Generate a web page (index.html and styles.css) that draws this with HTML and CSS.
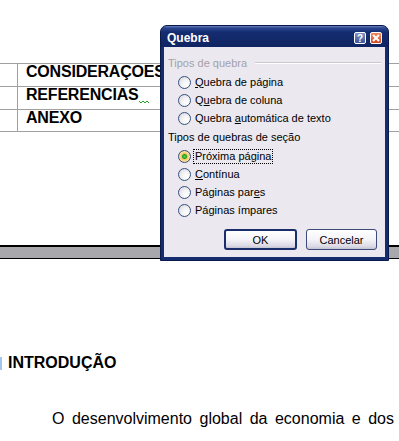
FILE: index.html
```html
<!DOCTYPE html>
<html lang="pt">
<head>
<meta charset="UTF-8" />
<title>Quebra</title>
<link rel="stylesheet" href="styles.css">
</head>
<body>

<!-- documento -->
<div class="doc">
  <div class="toc">
    <div class="toc-row"><span class="toc-num"></span><span class="toc-title">CONSIDERAÇOES FINAIS</span></div>
    <div class="toc-row"><span class="toc-num"></span><span class="toc-title">REFERENCIAS<svg class="squiggle" width="11" height="4" viewBox="0 0 11 4"><polyline points="0,1 2,3 4,1 6,3 8,1 10,3" fill="none" stroke="#2aa02a" stroke-width="1"/></svg></span></div>
    <div class="toc-row"><span class="toc-num"></span><span class="toc-title">ANEXO</span></div>
  </div>

  <div class="band"></div>

  <h2 class="heading"><span class="mark"></span>INTRODUÇÃO</h2>
  <p class="para">O desenvolvimento global da economia e dos</p>
</div>

<!-- janela Quebra -->
<div class="dialog">
  <div class="titlebar">
    <span class="title">Quebra</span>
    <span class="tb-btn help">?</span>
    <span class="tb-btn close">
      <svg width="8" height="8" viewBox="0 0 8 8"><path d="M1 1 L7 7 M7 1 L1 7" stroke="#fff" stroke-width="2"/></svg>
    </span>
  </div>
  <div class="panel">
    <div class="group-title disabled">Tipos de quebra</div>
    <div class="opt"><span class="radio"></span><span class="label"><u>Q</u>uebra de página</span></div>
    <div class="opt"><span class="radio"></span><span class="label">Q<u>u</u>ebra de coluna</span></div>
    <div class="opt"><span class="radio"></span><span class="label">Quebra <u>a</u>utomática de texto</span></div>

    <div class="group-title plain">Tipos de quebras de seção</div>
    <div class="opt"><span class="radio on"></span><span class="label focus">Próxima página</span></div>
    <div class="opt"><span class="radio"></span><span class="label"><u>C</u>ontínua</span></div>
    <div class="opt"><span class="radio"></span><span class="label">Páginas par<u>e</u>s</span></div>
    <div class="opt"><span class="radio"></span><span class="label">Pá<u>g</u>inas ímpares</span></div>

    <div class="buttons">
      <button class="btn default">OK</button>
      <button class="btn">Cancelar</button>
    </div>
  </div>
</div>

</body>
</html>
```

FILE: styles.css
```css
* { box-sizing: border-box; }

body {
  margin: 0;
  width: 399px;
  height: 441px;
  overflow: hidden;
  position: relative;
  background: #fff;
  font-family: "Liberation Sans", Arial, sans-serif;
  color: #000;
}

/* documento do Word */
.doc { padding-top: 63px; }

.toc { border-top: 1px solid #a0a0a0; }
.toc-row {
  display: flex;
  height: 23px;
  border-bottom: 1px solid #a0a0a0;
  white-space: nowrap;
}
.toc-row:last-child { height: 22px; }
.toc-num { width: 18px; flex: none; border-right: 1px solid #a0a0a0; }
.toc-title {
  padding-left: 8px;
  font-weight: bold;
  font-size: 16px;
  line-height: 16px;
  letter-spacing: -0.2px;
}
.squiggle { vertical-align: -4px; margin-left: 1px; }

.band {
  margin-top: 113px;
  height: 14px;
  border-top: 2px solid #000;
  border-bottom: 1px solid #000;
  background: #a8a7ac;
}

.heading {
  margin: 95px 0 0;
  font-size: 16px;
  line-height: 18px;
  font-weight: bold;
}
.mark {
  display: inline-block;
  width: 2px;
  height: 13px;
  margin-right: 6px;
  background: #9fc6ec;
  vertical-align: -2px;
}

.para {
  margin: 38px 0 0 8px;
  width: 386px;
  font-size: 16px;
  line-height: 18px;
  text-indent: 44px;
  text-align: justify;
  text-align-last: justify;
}

/* janela de dialogo estilo XP */
.dialog {
  position: absolute;
  left: 160px;
  top: 25px;
  width: 229px;
  height: 236px;
  border: 1px solid #0a1a4c;
  border-radius: 7px 7px 0 0;
  background: #152c6e;
  padding: 0 3px 3px;
  display: flex;
  flex-direction: column;
  font-size: 11px;
}

.titlebar {
  height: 21px;
  margin: 0 -3px;
  padding: 3px 6px 0 6px;
  display: flex;
  align-items: center;
  gap: 4px;
  border-radius: 6px 6px 0 0;
  background: linear-gradient(#6a80bc 0, #2c4690 2px, #142c70 6px, #0f2462 100%);
}
.title {
  flex: 1;
  color: #fff;
  font-weight: bold;
  font-size: 12px;
}
.tb-btn {
  width: 12px;
  height: 12px;
  border: 1px solid #fff;
  border-radius: 2px;
  display: flex;
  align-items: center;
  justify-content: center;
  color: #fff;
  font-weight: bold;
  font-size: 10px;
}
.help { background: linear-gradient(#7f93c6, #3d5599); }
.close { background: linear-gradient(#f08a5c, #d4471f); }

.panel {
  flex: 1;
  background: #ebe9ef;
  padding: 9px 4px 0 4px;
}

.group-title {
  height: 14px;
  line-height: 14px;
  display: flex;
  align-items: center;
}
.group-title.disabled { color: #a3a1aa; margin-bottom: 3px; }
.group-title.disabled::after {
  content: "";
  flex: 1;
  margin-left: 8px;
  border-top: 1px solid #c9c7d0;
  border-bottom: 1px solid #fff;
}
.group-title.plain { margin: 3px 0 3px; }

.opt {
  height: 18px;
  padding-left: 10px;
  display: flex;
  align-items: center;
}
.label { margin-left: 3px; padding: 0 1px; line-height: 13px; }
.label.focus { outline: 1px dotted #000; }

.radio {
  width: 13px;
  height: 13px;
  border-radius: 50%;
  border: 1px solid #35507e;
  background: radial-gradient(circle at 70% 70%, #fff 0, #f4f4f6 40%, #d4d2dc 100%);
  flex: none;
}
.radio.on {
  background: radial-gradient(circle, #5ed15e 0, #21a121 2px, #f9c35a 3px, #fbe3a6 5px, #f3b245 6px);
}

.buttons {
  margin-top: 10px;
  padding-right: 4px;
  display: flex;
  justify-content: flex-end;
  gap: 9px;
}
.btn {
  width: 71px;
  height: 21px;
  padding: 0;
  font-family: "Liberation Sans", Arial, sans-serif;
  font-size: 11px;
  color: #000;
  border: 1px solid #3b4a78;
  border-radius: 3px;
  background: linear-gradient(#ffffff 0, #f4f3f8 50%, #dcdbe6 85%, #c4c3d4 100%);
}
.btn.default {
  width: 73px;
  border: 2px solid #1a2e6c;
}
```
